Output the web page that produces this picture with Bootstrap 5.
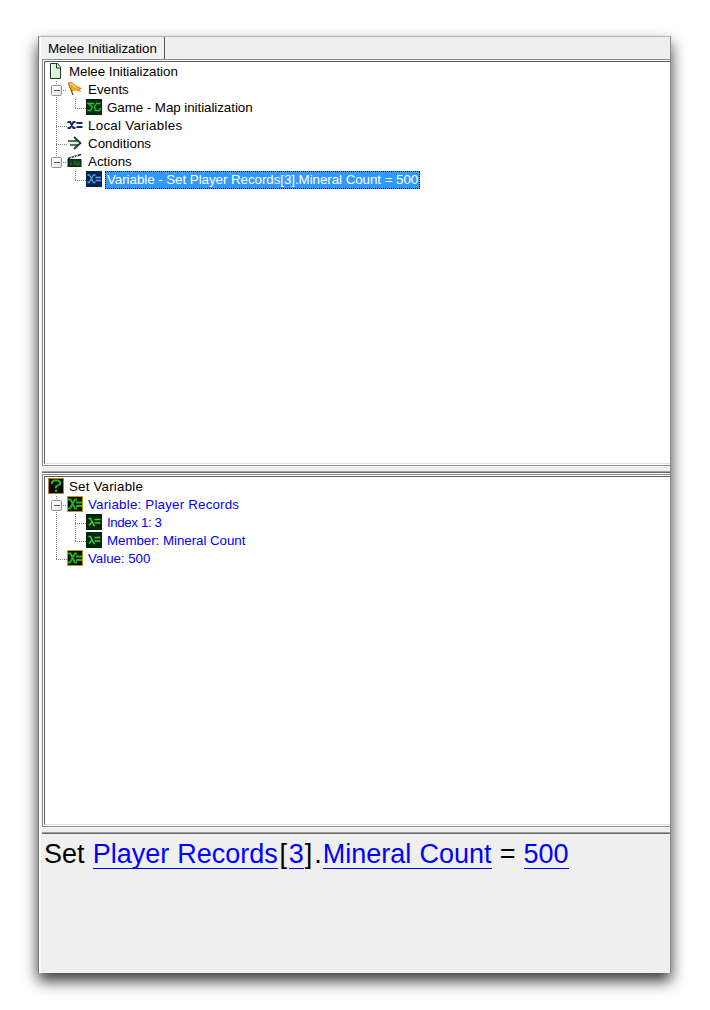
<!DOCTYPE html>
<html lang="en">
<head>
<meta charset="utf-8">
<meta name="viewport" content="width=device-width, initial-scale=1">
<title>Melee Initialization</title>
<link href="https://cdn.jsdelivr.net/npm/bootstrap@5.3.0/dist/css/bootstrap.min.css" rel="stylesheet">
<style>
body{background:#fff;font-family:"Liberation Sans",Arial,sans-serif;font-size:13.33px;color:#000;width:710px;height:1010px;overflow:hidden}
.editor{width:633px;height:937px;margin:36px 0 0 38px;background:#efefef;border:1px solid #8a8a8a;border-top-color:#b4b4b4;border-left-color:#777;border-bottom:0;box-shadow:0 8px 14px 0 rgba(0,0,0,.78);padding-left:3px}
.editor::before{content:"";width:2px;position:absolute;left:39px;top:59px;height:914px;background:#fcfcfc}
.tabs{height:22px;margin-left:-2px}
.tab-item{width:125px;height:22px;line-height:23px;padding-left:7px;border-right:1px solid #555;border-left:1px solid #fff;background:#f0f0f0}
.pane{border:1px solid #868a9b;border-right:0;border-bottom-color:#868686;background:#fff;padding:1px 0 1px 1px}
.pane-in{border:1px solid #5c5c5c;border-right:0;border-bottom-color:#dfdfdf;padding:1px 0 0 3px;height:100%}
.pane-a{height:407px}
.pane-b{height:353px}
.splitter{height:8px;border-bottom:1px solid #fff;background:linear-gradient(#fff 0 1px,#e3e5e3 1px 2px,#efefef 2px 5px,#a0a0a0 5px 6px,#696969 6px 7px)}
.splitter-b{height:7px;border:0}
.tree-row{height:18px;line-height:17px;white-space:nowrap}
.tree-row svg{flex:none;display:block}
.caption-text{padding:0 2px;margin-left:3px;height:18px;line-height:17px}
.picked{background:#3399ff;color:#fff;outline:1px dotted #000;outline-offset:-1px}
.snug{letter-spacing:-.045px}
.tight{letter-spacing:-.4px}
.roomy{letter-spacing:.2px}
.wide{letter-spacing:.28px}
.param{color:#00f}
.sentence{font-size:27px;line-height:32px;padding:4px 0 0 2px;white-space:pre;word-spacing:.6px}
.term{color:#00f;border-bottom:1px solid #00f;display:inline-block;line-height:27px}
.brk{display:inline-block;text-align:center}
.brk-open{width:11px}
.brk-close{width:19px;letter-spacing:2px;text-align:left;padding-left:1px}
</style>
</head>
<body>
<svg width="0" height="0" class="position-absolute" aria-hidden="true">
<defs>
<symbol id="g-v" viewBox="0 0 19 18"><path d="M8.5 0V18" stroke="#7c7c7c" stroke-dasharray="1 1"/></symbol>
<symbol id="g-t" viewBox="0 0 19 18"><path d="M8.5 0V18M8 9.5H19" fill="none" stroke="#7c7c7c" stroke-dasharray="1 1"/></symbol>
<symbol id="g-l" viewBox="0 0 19 18"><path d="M8.5 0V10M8 9.5H19" fill="none" stroke="#7c7c7c" stroke-dasharray="1 1"/></symbol>
<linearGradient id="bt" x1="0" y1="0" x2="1" y2="1"><stop offset=".3" stop-color="#fff"/><stop offset="1" stop-color="#dcdcdc"/></linearGradient>
<symbol id="g-box" viewBox="0 0 19 18"><rect x="3.5" y="4.500" width="10" height="10" rx="1" fill="url(#bt)" stroke="#919191"/><path d="M6 9.500H12" stroke="#3c5a9c"/><path d="M15 9.500H19" stroke="#7c7c7c" stroke-dasharray="1 1"/></symbol>
<symbol id="i-doc" viewBox="0 0 16 16"><path d="M2.500 .5H9.500L12.500 4V15.500H2.500Z" fill="#d9f3dd" stroke="#173c22"/><path d="M8.500 1V5H12.500" fill="#fff" stroke="#173c22"/><path d="M4 2V14" stroke="#fff"/></symbol>
<symbol id="i-flag" viewBox="0 0 16 16"><path d="M1.500 2L6 14" stroke="#6e4a16" stroke-width="1.300"/><path d="M1 2C4 .5 6 2 7.500 4C9 5.500 11 5.500 14.500 7.500L12 8L13.500 10.500C10 9 8 8 6 10L4.500 9Z" fill="#f5a91c" stroke="#b9761a" stroke-width=".7"/><path d="M3 3L6 4L9 7" fill="none" stroke="#ffe09a"/></symbol>
<symbol id="i-sc" viewBox="0 0 16 16"><rect width="16" height="16" fill="#02300f"/><rect x=".5" y=".5" width="15" height="15" fill="none" stroke="#08220f"/><path d="M8 4.500H2L6.500 8L4.500 11.500H1.500M14.500 4.500H10.500L8.500 8L9.500 11.500H13.500L14.500 9" fill="none" stroke="#24c52e" stroke-width="1.300"/></symbol>
<symbol id="i-var" viewBox="0 0 16 16"><path d="M.5 5H3L6.500 11H8.500M8.500 5H6.500L3 11H0.500" fill="none" stroke="#132d63" stroke-width="1.900"/><path d="M9.500 6H15.500M9.500 10H15.500" stroke="#132d63" stroke-width="2"/></symbol>
<symbol id="i-cond" viewBox="0 0 16 16"><path d="M1 6H11M3 10H11" stroke="#203f24" stroke-width="1.500"/><path d="M7 2L13.500 8L7 14" fill="none" stroke="#193d22" stroke-width="1.800"/><path d="M3 8H11" stroke="#b9e4bd"/></symbol>
<symbol id="i-clap" viewBox="0 0 16 16"><path d="M1 5.500L14 1.500" stroke="#1a241c" stroke-width="1.600"/><path d="M3.500 6L4.500 4M6.500 5L7.500 3M9.500 4L10.500 2" stroke="#fff"/><rect x="1" y="6.500" width="13" height="7" fill="#12391a" stroke="#13201a"/><path d="M4 8.500V12M6.500 8.500H8V12M10 8.500V12H12V8.500" fill="none" stroke="#2b7a33"/></symbol>
<symbol id="i-blue" viewBox="0 0 16 16"><rect width="16" height="16" fill="#05234f"/><path d="M1.500 4H3.500L7.500 11.500H9.500M9.500 4H7.500L3 11.500H1.500M9.500 6.500H15M9.500 9.500H15" fill="none" stroke="#52a5f2" stroke-width="1.300"/></symbol>
<symbol id="i-q" viewBox="0 0 16 16"><rect x=".5" y=".5" width="15" height="15" fill="#000" stroke="#b98a00"/><path d="M4 6V4L6 2.500H10L12 4V6L8 8.500V10.500" fill="none" stroke="#24b928" stroke-width="2"/><path d="M7 12H9V14H7Z" fill="#24b928"/></symbol>
<symbol id="i-x" viewBox="0 0 16 16"><rect x=".5" y=".5" width="15" height="15" fill="#020b02" stroke="#c79a00"/><path d="M1 3.500H3.500L8 12.500H10M10 3.500H8L3 12.500H1" fill="none" stroke="#1fb322" stroke-width="1.900"/><path d="M9 6.500H15M9 10H15" stroke="#1fb322" stroke-width="1.900"/></symbol>
<symbol id="i-lam" viewBox="0 0 16 16"><rect width="16" height="16" fill="#02270c"/><path d="M2.500 4.500H4.500L8 11.500H9M6 8L3 11.500" fill="none" stroke="#3ecb37" stroke-width="1.600"/><path d="M8.500 5.500H14.500M8.500 9H14.500" stroke="#3ecb37" stroke-width="1.700"/></symbol>
</defs></svg>

<main class="editor d-flex flex-column">
  <div class="tabs d-flex"><div class="tab-item snug">Melee Initialization</div></div>
  <section class="pane pane-a"><div class="pane-in">
    <div class="tree-row d-flex"><svg width="16" height="16"><use href="#i-doc"/></svg><span class="caption-text snug">Melee Initialization</span></div>
    <div class="tree-row d-flex"><svg width="19" height="18"><use href="#g-v"/><use href="#g-box"/></svg><svg width="16" height="16"><use href="#i-flag"/></svg><span class="caption-text">Events</span></div>
    <div class="tree-row d-flex"><svg width="19" height="18"><use href="#g-v"/></svg><svg width="19" height="18"><use href="#g-l"/></svg><svg width="16" height="16"><use href="#i-sc"/></svg><span class="caption-text snug">Game - Map initialization</span></div>
    <div class="tree-row d-flex"><svg width="19" height="18"><use href="#g-t"/></svg><svg width="16" height="16"><use href="#i-var"/></svg><span class="caption-text wide">Local Variables</span></div>
    <div class="tree-row d-flex"><svg width="19" height="18"><use href="#g-t"/></svg><svg width="16" height="16"><use href="#i-cond"/></svg><span class="caption-text">Conditions</span></div>
    <div class="tree-row d-flex"><svg width="19" height="18"><path d="M8.500 0V5" stroke="#7c7c7c" stroke-dasharray="1 1"/><use href="#g-box"/></svg><svg width="16" height="16"><use href="#i-clap"/></svg><span class="caption-text">Actions</span></div>
    <div class="tree-row d-flex"><svg width="19" height="18"></svg><svg width="19" height="18"><use href="#g-l"/></svg><svg width="16" height="16"><use href="#i-blue"/></svg><span class="caption-text picked snug">Variable - Set Player Records[3].Mineral Count = 500</span></div>
  </div></section>
  <div class="splitter"></div>
  <section class="pane pane-b"><div class="pane-in">
    <div class="tree-row d-flex"><svg width="16" height="16"><use href="#i-q"/></svg><span class="caption-text roomy">Set Variable</span></div>
    <div class="tree-row d-flex param"><svg width="19" height="18"><use href="#g-v"/><use href="#g-box"/></svg><svg width="16" height="16"><use href="#i-x"/></svg><span class="caption-text roomy">Variable: Player Records</span></div>
    <div class="tree-row d-flex param"><svg width="19" height="18"><use href="#g-v"/></svg><svg width="19" height="18"><use href="#g-t"/></svg><svg width="16" height="16"><use href="#i-lam"/></svg><span class="caption-text tight">Index 1: 3</span></div>
    <div class="tree-row d-flex param"><svg width="19" height="18"><use href="#g-v"/></svg><svg width="19" height="18"><use href="#g-l"/></svg><svg width="16" height="16"><use href="#i-lam"/></svg><span class="caption-text snug">Member: Mineral Count</span></div>
    <div class="tree-row d-flex param"><svg width="19" height="18"><use href="#g-l"/></svg><svg width="16" height="16"><use href="#i-x"/></svg><span class="caption-text snug">Value: 500</span></div>
  </div></section>
  <div class="splitter splitter-b"></div>
  <div class="sentence">Set <span class="term">Player Records</span><span class="brk brk-open">[</span><span class="term">3</span><span class="brk brk-close">].</span><span class="term">Mineral Count</span> = <span class="term">500</span></div>
</main>
<script src="https://cdn.jsdelivr.net/npm/bootstrap@5.3.0/dist/js/bootstrap.bundle.min.js"></script>
</body>
</html>
